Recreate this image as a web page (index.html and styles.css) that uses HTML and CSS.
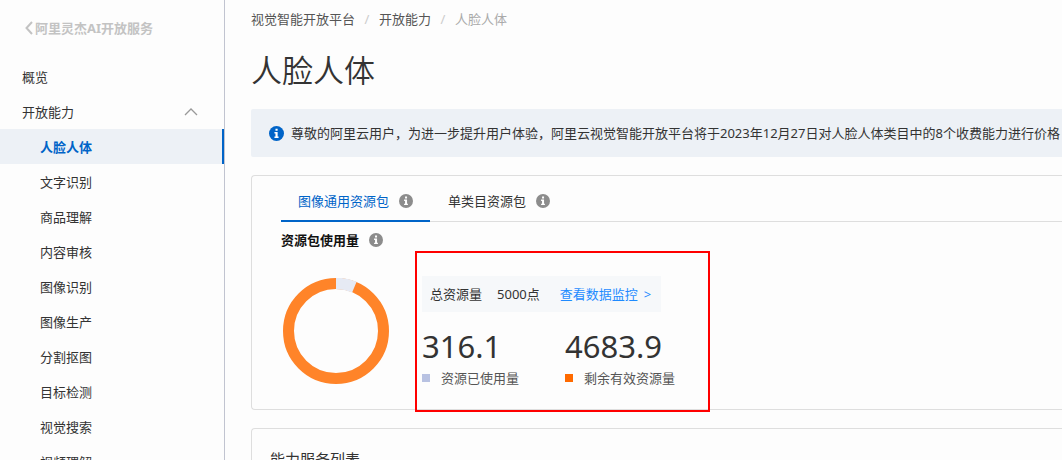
FILE: index.html
```html
<!DOCTYPE html>
<html lang="zh-CN">
<head>
<meta charset="utf-8">
<title>人脸人体</title>
<link rel="stylesheet" href="styles.css">
</head>
<body>
<svg class="defs" aria-hidden="true">
  <symbol id="info" viewBox="0 0 16 16">
    <circle cx="8" cy="8" r="8" fill="currentColor"/>
    <path d="M6.9 2.8h2.3v2.2H6.9zM5.8 6.4h3.4v4.8h1v1.5H5.8v-1.5h1.1V7.9H5.8z" fill="#fff"/>
  </symbol>
</svg>
<div class="app">
  <aside class="sidebar">
    <a class="back" href="#">
      <svg class="back-icon" viewBox="0 0 8 14" aria-hidden="true"><path d="M7 1 1.5 7 7 13" fill="none" stroke="currentColor" stroke-width="2"/></svg>
      <span>阿里灵杰AI开放服务</span>
    </a>
    <nav class="menu">
      <a class="item" href="#">概览</a>
      <button class="item group" type="button" aria-expanded="true">
        <span>开放能力</span>
        <svg class="chevron" viewBox="0 0 14 8" aria-hidden="true"><path d="M1 7l6-6 6 6" fill="none" stroke="currentColor" stroke-width="1.3"/></svg>
      </button>
      <a class="item sub active" href="#">人脸人体</a>
      <a class="item sub" href="#">文字识别</a>
      <a class="item sub" href="#">商品理解</a>
      <a class="item sub" href="#">内容审核</a>
      <a class="item sub" href="#">图像识别</a>
      <a class="item sub" href="#">图像生产</a>
      <a class="item sub" href="#">分割抠图</a>
      <a class="item sub" href="#">目标检测</a>
      <a class="item sub" href="#">视觉搜索</a>
      <a class="item sub" href="#">视频理解</a>
    </nav>
  </aside>
  <main class="main">
    <nav class="crumbs">
      <a href="#">视觉智能开放平台</a><span class="sep">/</span><a href="#">开放能力</a><span class="sep">/</span><span class="current">人脸人体</span>
    </nav>
    <h1 class="title">人脸人体</h1>
    <div class="notice">
      <svg class="notice-icon"><use href="#info"/></svg>
      <span>尊敬的阿里云用户，为进一步提升用户体验，阿里云视觉智能开放平台将于2023年12月27日对人脸人体类目中的8个收费能力进行价格</span>
    </div>
    <section class="card usage">
      <div class="tabs" role="tablist">
        <button class="tab selected" type="button" role="tab" aria-selected="true">图像通用资源包<svg class="info"><use href="#info"/></svg></button>
        <button class="tab" type="button" role="tab" aria-selected="false">单类目资源包<svg class="info"><use href="#info"/></svg></button>
      </div>
      <h2 class="subtitle">资源包使用量<svg class="info"><use href="#info"/></svg></h2>
      <div class="overview">
        <svg class="donut" viewBox="0 0 106 106" role="img" aria-label="资源包使用量">
          <circle cx="53" cy="53" r="47.5" fill="none" stroke="#ff8429" stroke-width="11"/>
          <circle cx="53" cy="53" r="47.5" fill="none" stroke="#e6eaf4" stroke-width="11.6" pathLength="5000" stroke-dasharray="316.1 4683.9" transform="rotate(-90 53 53)"/>
        </svg>
        <div class="stats">
          <div class="total">
            <span>总资源量</span><span>5000点</span><a class="monitor" href="#"><span>查看数据监控</span><span>&gt;</span></a>
          </div>
          <dl class="figures">
            <div class="figure">
              <dt class="used">资源已使用量</dt>
              <dd>316.1</dd>
            </div>
            <div class="figure">
              <dt class="left">剩余有效资源量</dt>
              <dd>4683.9</dd>
            </div>
          </dl>
        </div>
      </div>
    </section>
    <section class="card services">
      <h2 class="services-title">能力服务列表</h2>
    </section>
  </main>
</div>
</body>
</html>
```
FILE: styles.css
```css
* { box-sizing: border-box; }

body {
  margin: 0;
  background: #fdfdfd;
  color: #333;
  font: 13px/20px "Noto Sans", "Noto Sans CJK SC", sans-serif;
}

a { color: inherit; text-decoration: none; }

button {
  padding: 0;
  border: 0;
  background: none;
  color: inherit;
  font: inherit;
  cursor: pointer;
}

h1, h2, dl, dd { margin: 0; }

.defs { display: none; }

.app {
  display: flex;
  height: 100vh;
  overflow: hidden;
}

.sidebar {
  flex: 0 0 225px;
  border-right: 1px solid #c1c4d0;
}

.back {
  display: flex;
  align-items: center;
  gap: 2px;
  padding: 18px 0 21px 25px;
  color: #c3c3c3;
  font-weight: 700;
}

.back-icon { width: 8px; height: 14px; }

.menu { display: flex; flex-direction: column; }

.item {
  display: flex;
  align-items: center;
  justify-content: space-between;
  width: 100%;
  height: 35px;
  padding: 0 26px 0 22px;
}

.chevron { width: 14px; height: 8px; color: #999; }

.sub { padding-left: 40px; }

.active {
  border-right: 2px solid #0064c8;
  background: #edf1f6;
  color: #0064c8;
  font-weight: 700;
}

.main {
  flex: 1;
  min-width: 0;
  padding: 9px 0 0 26px;
  overflow: hidden;
}

.crumbs { display: flex; color: #555; }
.sep { width: 24px; color: #ccc; text-align: center; }
.current { color: #aaa; }

.title {
  padding: 20px 0 18px;
  font-size: 31px;
  font-weight: 350;
  line-height: 42px;
}

.notice {
  display: flex;
  align-items: center;
  gap: 7px;
  height: 48px;
  padding-left: 18px;
  border-radius: 2px 0 0 2px;
  background: #edf1f6;
  white-space: nowrap;
}

.notice-icon { flex: none; width: 15px; height: 15px; color: #0064c8; }

.card {
  margin-top: 18px;
  border: 1px solid #dedede;
  border-right: 0;
  border-radius: 4px 0 0 4px;
}

.usage { padding: 5px 0 21px 29px; }

.tabs { display: flex; border-bottom: 1px solid #dedede; }

.tab {
  display: flex;
  align-items: center;
  gap: 10px;
  height: 41px;
  margin-bottom: -1px;
  padding: 0 18px;
  border-bottom: 2px solid transparent;
}

.selected { padding: 0 17px; border-color: #0064c8; color: #0064c8; }

.info { width: 14px; height: 14px; color: #8c8c8c; }

.subtitle {
  display: flex;
  align-items: center;
  gap: 10px;
  padding: 8px 0 26px;
  color: #111;
  font-size: 13px;
  font-weight: 700;
  line-height: 20px;
}

.overview { display: flex; gap: 33px; padding-left: 2px; }

.donut { width: 106px; height: 106px; margin-top: 2px; }

.stats { position: relative; }

/* highlight frame drawn around the figures */
.stats::after {
  content: "";
  position: absolute;
  inset: -25px -35px -24px -7px;
  border: 2px solid #f00;
  pointer-events: none;
}

.total {
  display: flex;
  gap: 15px;
  width: max-content;
  padding: 8px;
  background: #f6f8fa;
}

.monitor { display: flex; gap: 6px; padding: 0 2px 0 5px; color: #1e8bff; }

.figures { display: flex; gap: 46px; margin-top: 14px; }

.figure { display: flex; flex-direction: column-reverse; gap: 2px; }

.figure dt { display: flex; align-items: center; gap: 11px; color: #555; }

.figure dt::before {
  content: "";
  width: 8px;
  height: 8px;
}

.used::before { background: #b8c2e2; }
.left::before { background: #ff6a00; }

.figure dd { font-size: 31px; line-height: 40px; }

.services { padding: 19px 0 20px 18px; }

.services-title { font-size: 15px; font-weight: 400; line-height: 22px; }
```
